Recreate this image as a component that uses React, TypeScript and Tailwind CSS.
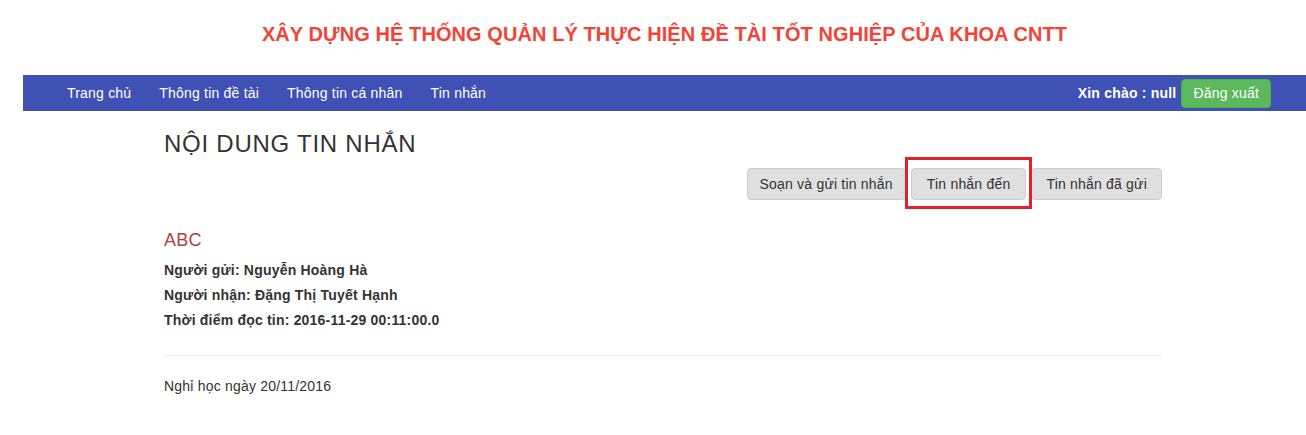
export default function App() {
  const navItems = ['Trang chủ', 'Thông tin đề tài', 'Thông tin cá nhân', 'Tin nhắn'];

  return (
    <div className="min-h-[435px] bg-white font-['Liberation_Sans',Arial,sans-serif] text-[14px] tracking-[0.2px] text-[#333]">
      <div className="ml-[23px]">
        {/* page title */}
        <h1 className="pt-[23px] text-center text-[20px] font-bold leading-[22px] tracking-[0.08px] text-[#f44336]">
          XÂY DỰNG HỆ THỐNG QUẢN LÝ THỰC HIỆN ĐỀ TÀI TỐT NGHIỆP CỦA KHOA CNTT
        </h1>

        {/* navbar */}
        <nav className="mt-[30px] flex h-[36px] items-center bg-[#3f51b5] pl-[30px] pr-[35px] text-white">
          <ul className="flex">
            {navItems.map((item) => (
              <li key={item} className="px-[14px] leading-[20px]">
                {item}
              </li>
            ))}
          </ul>
          <div className="ml-auto flex items-center gap-[5px]">
            <span className="font-bold">Xin chào : null</span>
            <button className="h-[29px] rounded-[4px] border border-[#4cae4c] bg-[#5cb85c] px-[11px] leading-[20px] text-white">
              Đăng xuất
            </button>
          </div>
        </nav>

        {/* content */}
        <div className="ml-[141px] w-[998px]">
          <h2 className="mt-[20px] text-[24px] leading-[26px] tracking-[0.75px]">NỘI DUNG TIN NHẮN</h2>

          <div className="mt-[11px] flex justify-end gap-[5px]">
            <button className="h-[32px] rounded-[4px] border border-[#ccc] bg-[#e0e0e0] px-[12px] leading-[20px]">
              Soạn và gửi tin nhắn
            </button>
            <div className="relative">
              <button className="h-[32px] rounded-[4px] border border-[#ccc] bg-[#e0e0e0] px-[15px] leading-[20px]">
                Tin nhắn đến
              </button>
              <div className="pointer-events-none absolute -top-[11px] -bottom-[9px] -left-[6px] -right-[6px] border-[3px] border-[#e3202b]" />
            </div>
            <button className="h-[32px] rounded-[4px] border border-[#ccc] bg-[#e0e0e0] px-[14px] leading-[20px]">
              Tin nhắn đã gửi
            </button>
          </div>

          <h3 className="mt-[30px] text-[18px] leading-[20px] text-[#a94442]">ABC</h3>
          <div className="mt-[8px] font-bold leading-[25px]">
            <p>Người gửi: Nguyễn Hoàng Hà</p>
            <p>Người nhận: Đặng Thị Tuyết Hạnh</p>
            <p>Thời điểm đọc tin: 2016-11-29 00:11:00.0</p>
          </div>

          <hr className="mt-[22px] border-t border-[#eee]" />

          <p className="mt-[20px] leading-[20px]">Nghỉ học ngày 20/11/2016</p>
        </div>
      </div>
    </div>
  );
}
